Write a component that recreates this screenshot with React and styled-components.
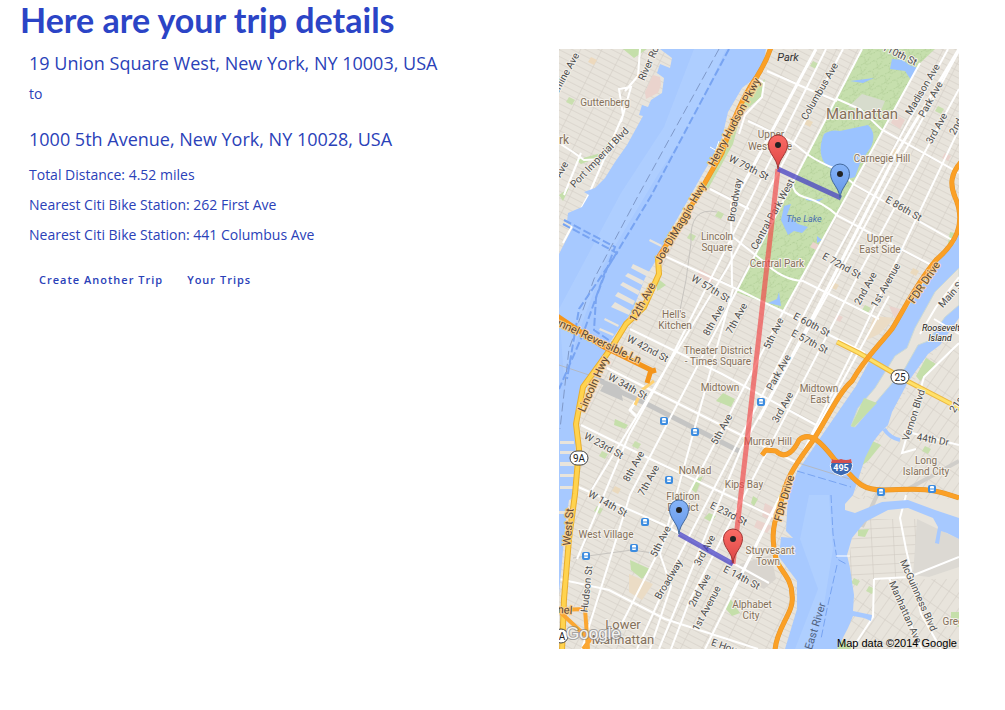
import React from "react";
import styled, { createGlobalStyle } from "styled-components";

const GlobalStyle = createGlobalStyle`
  body {
    margin: 0;
    background: #fff;
    color: #2a41b8;
    font-family: "Open Sans", "Noto Sans", sans-serif;
  }
`;

const Page = styled.div`
  padding: 0 46px 60px 20px;
`;

const Title = styled.h1`
  margin: 0;
  padding-bottom: 9px;
  font-family: Lato, "Open Sans", sans-serif;
  font-size: 34px;
  font-weight: 700;
  line-height: 40px;
  color: #2b44c6;
`;

const Content = styled.main`
  display: flex;
  align-items: flex-start;
  justify-content: space-between;
  gap: 40px;
`;

const Details = styled.section`
  padding-left: 9px;
  min-width: 0;
`;

const Address = styled.h2`
  margin: 0;
  padding-bottom: ${({ $gap }) => $gap || "6px"};
  font-size: 18px;
  font-weight: 400;
  line-height: 28px;
`;

const Line = styled.p`
  margin: 0;
  padding-bottom: ${({ $gap }) => $gap || "10px"};
  font-size: 14px;
  line-height: 20px;
`;

const Actions = styled.div`
  display: flex;
  gap: 4px;
  padding-top: 10px;
`;

const Action = styled.button`
  border: 0;
  padding: 5px 10px;
  background: transparent;
  color: #2a41b8;
  font-family: "Open Sans", "Noto Sans", sans-serif;
  font-size: 11px;
  font-weight: 600;
  letter-spacing: 1px;
  line-height: 20px;
  cursor: pointer;
`;

const MapFrame = styled.figure`
  flex: 0 0 400px;
  margin: 0;
`;

const MapDrawing = styled.svg`
  display: block;
  width: 100%;
  height: auto;
  font-family: Roboto, sans-serif;
`;

const MapText = styled.text`
  font-size: ${({ $size }) => $size}px;
  font-style: ${({ $italic }) => ($italic ? "italic" : "normal")};
  fill: ${({ $fill }) => $fill};
  text-anchor: middle;
  paint-order: stroke;
  stroke: ${({ $halo }) => $halo};
  stroke-width: 2px;
  stroke-linejoin: round;
`;

const PLACE = "#84705a";
const STREET = "#4d4d4d";
const ROUTE = "#5a4534";
const ISLAND = "#222222";

const halos = {
  [PLACE]: "#f4f1eb",
  [STREET]: "#f4f1eb",
  [ISLAND]: "#f4f1eb",
  [ROUTE]: "#fbd08c",
};

const labels = [
  ["Guttenberg", 46, 53, 0, PLACE],
  ["rk", 5, 91, 0, PLACE, 12],
  ["Park", 229, 8, 0, "#333", 11, true],
  ["Manhattan", 303, 66, 0, PLACE, 15],
  ["Upper", 212, 85, 0, PLACE],
  ["West Side", 211, 97, 0, PLACE],
  ["Carnegie Hill", 323, 109, 0, PLACE],
  ["The Lake", 245, 169, 0, "#4b6fae", 9, true],
  ["Lincoln", 158, 187, 0, PLACE],
  ["Square", 158, 198, 0, PLACE],
  ["Central Park", 218, 214, 0, PLACE],
  ["Upper", 321, 189, 0, PLACE],
  ["East Side", 321, 200, 0, PLACE],
  ["Hell's", 115, 265, 0, PLACE],
  ["Kitchen", 116, 276, 0, PLACE],
  ["Theater District", 159, 301, 0, PLACE],
  ["- Times Square", 159, 312, 0, PLACE],
  ["Midtown", 161, 338, 0, PLACE],
  ["Midtown", 260, 339, 0, PLACE],
  ["East", 261, 350, 0, PLACE],
  ["Murray Hill", 209, 392, 0, PLACE],
  ["NoMad", 136, 421, 0, PLACE],
  ["Kips Bay", 185, 435, 0, PLACE],
  ["Flatiron", 124, 447, 0, PLACE],
  ["District", 124, 458, 0, PLACE],
  ["West Village", 47, 485, 0, PLACE],
  ["Stuyvesant", 211, 501, 0, PLACE],
  ["Town", 209, 512, 0, PLACE],
  ["Alphabet", 193, 555, 0, PLACE],
  ["City", 192, 566, 0, PLACE],
  ["Lower", 64, 576, 0, PLACE, 13],
  ["Manhattan", 64, 591, 0, PLACE, 13],
  ["Long", 367, 411, 0, PLACE],
  ["Island City", 367, 422, 0, PLACE],
  ["Greenpoint", 408, 572, 0, PLACE],
  ["Roosevelt", 382, 278, 0, ISLAND, 9, true],
  ["Island", 381, 288, 0, ISLAND, 9, true],
  ["Bergenline Ave", 1, 33, -61, STREET],
  ["River Rd", 89, 14, -66, STREET],
  ["Port Imperial Blvd", 40, 108, -46, STREET],
  ["Ave", 2, 120, -60, STREET],
  ["Columbus Ave", 260, 42, -60, STREET],
  ["110th St", 341, 5, 26, STREET],
  ["Madison Ave", 363, 40, -59, STREET],
  ["Park Ave", 371, 50, -61, STREET],
  ["3rd Ave", 377, 79, -61, STREET],
  ["2nd Ave", 401, 69, -61, STREET],
  ["W 79th St", 190, 118, 27, STREET],
  ["Broadway", 175, 151, -80, STREET],
  ["Central Park West", 213, 165, -61, STREET],
  ["E 86th St", 345, 159, 30, STREET],
  ["W 57th St", 152, 239, 31, STREET],
  ["8th Ave", 154, 271, -61, STREET],
  ["7th Ave", 177, 269, -61, STREET],
  ["5th Ave", 214, 284, -64, STREET],
  ["2nd Ave", 306, 239, -61, STREET],
  ["1st Avenue", 326, 236, -60, STREET],
  ["E 72nd St", 283, 216, 29, STREET],
  ["E 60th St", 253, 275, 28, STREET],
  ["E 57th St", 251, 292, 28, STREET],
  ["Main St", 392, 244, -48, STREET],
  ["W 42nd St", 89, 299, 28, STREET],
  ["W 34th St", 69, 337, 29, STREET],
  ["Park Ave", 219, 323, -61, STREET],
  ["3rd Ave", 223, 358, -61, STREET],
  ["5th Ave", 162, 380, -61, STREET],
  ["W 23rd St", 45, 396, 29, STREET],
  ["8th Ave", 74, 417, -61, STREET],
  ["7th Ave", 89, 431, -61, STREET],
  ["Vernon Blvd", 354, 366, -72, STREET],
  ["44th Dr", 374, 390, 10, STREET],
  ["21st St", 401, 349, -56, STREET],
  ["W 14th St", 49, 454, 29, STREET],
  ["5th Ave", 101, 492, -63, STREET],
  ["E 23rd St", 170, 464, 27, STREET],
  ["3rd Ave", 145, 501, -61, STREET],
  ["Broadway", 109, 530, -59, STREET],
  ["2nd Ave", 140, 541, -62, STREET],
  ["1st Avenue", 147, 559, -62, STREET],
  ["E 14th St", 183, 528, 28, STREET],
  ["E Houston St", 180, 602, 20, STREET],
  ["Hudson St", 27, 540, -84, STREET],
  ["McGuinness Blvd", 360, 546, 66, STREET],
  ["Manhattan Ave", 347, 563, 66, STREET],
  ["East River", 256, 577, -73, "#50617e", 11],
  ["Henry Hudson Pkwy", 175, 73, -62, ROUTE],
  ["Joe DiMaggio Hwy", 121, 174, -60, ROUTE],
  ["12th Ave", 83, 253, -61, ROUTE],
  ["Tunnel Reversible Ln", 36, 290, 25, ROUTE],
  ["Lincoln Hwy", 34, 335, -66, ROUTE],
  ["West St", 9, 478, -85, ROUTE],
  ["FDR Drive", 365, 233, -56, ROUTE],
  ["FDR Drive", 225, 449, -74, ROUTE],
  ["Tunnel", -3, 560, 4, ROUTE],
];

function Label({ text, x, y, angle = 0, fill, size, italic }) {
  return (
    <MapText
      y="4"
      transform={`translate(${x} ${y}) rotate(${angle})`}
      $fill={fill}
      $size={size || (fill === ROUTE ? 11 : 10)}
      $italic={italic}
      $halo={halos[fill] || "none"}
    >
      {text}
    </MapText>
  );
}

function Pin({ x, y, top, bottom, edge }) {
  const id = `pin-${top.slice(1)}`;
  return (
    <g transform={`translate(${x} ${y})`}>
      <defs>
        <linearGradient id={id} x1="0" y1="0" x2="0" y2="1">
          <stop offset="0" stopColor={top} />
          <stop offset="1" stopColor={bottom} />
        </linearGradient>
      </defs>
      <path
        d="M0 0C-1-11-9.500-15-9.500-24.500A9.500 9.500 0 0 1 9.500-24.500C9.500-15 1-11 0 0Z"
        fill={`url(#${id})`}
        stroke={edge}
      />
      <circle cy="-24" r="3" fill="#222" />
    </g>
  );
}

const stations = [[202, 353], [105, 372], [136, 383], [110, 431], [86, 473], [75, 499], [27, 507], [322, 443], [373, 440]];
const fields = [[32, 8, "#edd9bd"], [10, 48, "#c9dfaf"], [254, 12, "#c9dfaf"], [248, 70, "#ead9bd"], [131, 184, "#c9dfaf"], [159, 162, "#c9dfaf"], [379, 57, "#c9dfaf"], [334, 99, "#ead9bd"], [386, 104, "#ead3cd"], [254, 193, "#ead3cd"], [306, 256, "#c9dfaf"], [354, 219, "#ead9bd"], [274, 233, "#ead9bd"], [366, 397, "#c9dfaf"], [310, 537, "#c9dfaf"], [295, 529, "#c9dfaf"], [38, 457, "#c9dfaf"], [56, 437, "#ead9bd"], [43, 402, "#c9dfaf"], [76, 392, "#c9dfaf"], [278, 265, "#ead3cd"]];

const bankWest = "M101 0L113 9L111 19L101 15L98 24L105 29L103 44L92 51L89 58L83 56L80 66L84 67L68 96L56 113L46 129L36 139L25 143L30 146L23 158L9 164L8 173L14 178L3 199L0 205V545L3 513L6 479L10 451L14 449L16 409L18 376L21 356L26 333L46 306L51 293L63 276L73 263L86 229L96 213L109 186L129 151L143 126L153 109L163 89L169 63L183 39L196 29L204 18L207 0Z";
const eastRiver = "M400 166L396 194L376 216L353 252L330 286L316 302L297 337L257 395L238 423L229 446L227 482L234 489L222 488L220 508L238 532L238 560L226 600H278L289 579L294 567L305 569L312 572L313 566L294 562L295 546L291 519L288 506L293 489L306 473L329 461L349 459L374 469L379 478L376 494L380 495L382 482L388 484L400 490V469L376 461L349 451L323 453L296 464L286 461L286 455L294 446L300 428L306 409L314 393L321 384L329 376L333 363L349 333L369 305L381 296L400 269Z";
const orangeRoads = "M212 -2C207 14 202 21 197 29C183 49 171 79 163 104L139 146L99 209M403 112C391 125 391 136 396 148C408 175 396 195 377 211C357 235 347 257 333 280C317 300 306 309 293 332C280 343 268 370 253 393C233 420 227 430 221 457C211 482 214 495 217 510C221 522 233 529 233 546C236 563 218 577 216 601M203 406L207 401L217 402C227 412 236 400 240 391C251 381 263 394 276 411C295 426 297 441 323 441C348 441 366 436 400 449";
const yellowRoad = "M99 209L100 225L85 258L67 275L53 298L24 338L17 375L20 400L16 445L10 490L5 550L3 602";

export default function App() {
  return (
    <Page>
      <GlobalStyle />
      <Title>Here are your trip details</Title>
      <Content>
        <Details>
          <Address $gap="7px">19 Union Square West, New York, NY 10003, USA</Address>
          <Line $gap="21px">to</Line>
          <Address $gap="12px">1000 5th Avenue, New York, NY 10028, USA</Address>
          <Line>Total Distance: 4.52 miles</Line>
          <Line>Nearest Citi Bike Station: 262 First Ave</Line>
          <Line>Nearest Citi Bike Station: 441 Columbus Ave</Line>
          <Actions>
            <Action type="button">Create Another Trip</Action>
            <Action type="button">Your Trips</Action>
          </Actions>
        </Details>
        <MapFrame>
          <MapDrawing viewBox="0 0 400 600" role="img" aria-label="Map of the trip through Manhattan">
            <defs>
              <pattern id="blocks" width="19" height="6" patternUnits="userSpaceOnUse" patternTransform="rotate(27)">
                <path d="M0 0H19M0 0V6" stroke="#cfcac2" fill="none" />
              </pattern>
              <pattern id="queens" width="9" height="20" patternUnits="userSpaceOnUse" patternTransform="rotate(35)">
                <path d="M0 0H9M0 0V20" stroke="#cfcac2" fill="none" />
              </pattern>
              <pattern id="brooklyn" width="22" height="9" patternUnits="userSpaceOnUse" patternTransform="rotate(-3)">
                <path d="M0 0H22M0 0V9" stroke="#cbc6be" fill="none" />
              </pattern>
              <pattern id="park" width="13" height="11" patternUnits="userSpaceOnUse" patternTransform="rotate(20)">
                <path d="M0 3Q4 0 6 6T13 3M3 11Q8 7 9 0" stroke="#adcb93" strokeDasharray="2 1" fill="none" />
              </pattern>
            </defs>
            <rect width="400" height="600" fill="#e8e4dc" />
            <rect width="400" height="600" fill="url(#blocks)" />
            <path d="M400 269L333 363L294 446L400 455Z" fill="#e8e4dc" />
            <path d="M400 269L333 363L294 446L400 455Z" fill="url(#queens)" />
            <path d="M270 450H400V600H270Z" fill="#e8e4dc" />
            <path d="M295 470H358V530H288Z" fill="url(#brooklyn)" />
            <path d="M292 530H400V600H270Z" fill="url(#queens)" />
            <path d="M358 470L400 490V518L370 528L354 526Z" fill="#dcd9d3" />
            <path d="M181 515L212 506L217 530L205 540L180 528Z" fill="#d9d5cf" />

            <path d="M303 0H376L359 16L225 261L177 243Z" fill="#c6dfad" />
            <path d="M303 0H376L359 16L225 261L177 243Z" fill="url(#park)" />
            <path d="M303 45L326 52L321 64L289 58Z" fill="#d7dccd" />
            <path d="M265 85Q272 80 281 82L309 76Q318 84 312 98L301 114L296 128L286 131L275 122L268 117Q257 105 265 85Z" fill="#9bc3ff" />
            <path d="M333 10L344 11L350 16L359 19L352 31L346 22L331 20ZM291 32L315 29L304 34ZM247 148L256 151L265 149L259 153L247 151ZM225 157L232 155L228 166L239 175L249 178L243 184L235 182L229 186L222 171ZM258 187L263 191L258 194ZM220 243L222 257L209 254L218 250Z" fill="#9bc3ff" />

            <path d="M64 0H88L75 9ZM59 80L45 106L22 115L17 111L42 104ZM400 185L388 200L391 183ZM164 344L176 350L172 358L157 352ZM135 431L144 427L137 444L132 440ZM71 511L91 520L83 530L72 521ZM98 229L107 236L98 242ZM206 30L202 48L182 65L174 95L149 140L143 135L163 103L172 75L186 47ZM0 146L10 139L4 152ZM10 378L17 373L17 388L6 384ZM278 587L294 600H273ZM392 563H400V578L392 575ZM299 481L310 480L306 488L299 487ZM307 389L322 396L309 412L298 420ZM166 559L171 549L181 564L173 567ZM367 309L377 315L361 332L357 327ZM56 370L69 376L66 380L55 376ZM150 464L157 467L152 473L145 469ZM194 447L199 450L195 457L192 454Z" fill="#c5dfaa" />
            <path d="M94 26L101 28L102 36L99 44L87 50L86 43ZM141 220L155 228L152 234L138 227ZM330 257L345 261L336 270ZM336 65L346 71L341 80L332 74ZM206 454L219 461L212 472L203 467ZM198 471L213 477L208 484L195 478Z" fill="#ead3cd" />
            <path d="M70 525L94 535L83 551L70 543ZM315 267L336 269L320 285L306 292Z" fill="#ebdcc5" />
            {fields.map(([x, y, color]) => (
              <path key={`${x}-${y}`} d={`M${x} ${y}l6 3l-3 5l-6 -3Z`} fill={color} />
            ))}

            <path d="M158 163Q130 157 132 194L127 231L119 271M14 509L73 501L101 505" fill="none" stroke="#c7c4bf" />
            <path d="M303 478L321 440H349L400 412" fill="none" stroke="#d0ceca" strokeWidth="4" />
            <path d="M40 331L66 345L86 354L180 402" fill="none" stroke="#c5c5c4" strokeWidth="5" />
            <path d="M47 332L61 337L64 352L41 342Z" fill="#c5c5c4" />

            <g fill="none" stroke="#fff" strokeWidth="2">
              <path d="M284 0L169 218L29 447M303 0L177 243L71 446L23 600M172 155L173 237M174 240L101 505L112 537L91 600M267 0L103 327L70 386L18 510M361 14L225 261L105 492L60 580M389 0L253 250L121 505L78 600M400 2L280 225L182 400L100 600M400 40L302 221L130 553L112 600M400 80L302 286L146 600M330 247L220 449L171 547" />
              <path d="M208 22L249 40L278 52M278 50L301 60L322 80L400 124M189 72L232 92L248 105Q261 114 277 120L296 136L400 195M234 131Q232 144 245 148Q264 153 279 167L376 218M99 204L182 242L229 265L306 304M71 280L163 325L257 376M48 319L180 385L240 415M22 376L87 408L215 468M17 437L105 476L210 534M151 140L190 160M170 185L204 212Q223 231 244 232L320 270M0 530L50 541L106 570L199 600M196 29L205 34L203 48L186 66L180 85" />
              <path d="M81 0L79 27L66 42M62 73L72 38L60 40L64 66L30 145L4 194M0 94L14 103L25 111L45 110L66 80M22 104L5 146M400 294L365 328L343 404L357 400M345 382L400 396M347 446L341 469L347 500L362 565L382 600M315 530L350 528L400 508M315 530L314 568L293 600M330 529L363 600M400 232L361 273L348 299" />
            </g>
            <path d="M257 0L190 125L172 157M400 0L337 105L258 260L200 370" fill="none" stroke="#fff" strokeWidth="3" />

            <path d={bankWest} fill="#a7c9ff" />
            <path d={eastRiver} fill="#a7c9ff" />
            <path d="M135 0H167L132 75L98 127L44 217L21 280L5 330L0 260L62 144L105 78Z" fill="#b2d1ff" opacity=".65" />
            <path d="M250 446H270L274 500L265 556L247 600H236L259 540L241 490Z" fill="#b2d1ff" opacity=".7" />
            <path d="M400 219L376 243L356 279L348 299L336 307L316 339L299 359L292 377L296 378L323 346L346 319L359 296L369 292L386 268L400 256Z" fill="#e8e4dc" stroke="#cbd9d5" />
            <path d="M400 228L377 258L361 285M375 270L400 285" fill="none" stroke="#fff" strokeWidth="2" />
            <path d="M305 349L318 354L295 378L292 377Z" fill="#c5dfaa" />
            <path d="M325 380Q331 389 341 391" fill="none" stroke="#a7c9ff" strokeWidth="4" />

            <g fill="#e8e4dc">
              <path d="M91 190l12 6l-1 2l-12 -6ZM74 215l17 8l-2 5l-17 -9ZM69 224l16 8l-2 4l-17 -9ZM64 233l17 9l-2 4l-18 -10ZM59 243l17 9l-2 4l-18 -9ZM56 253l16 9l-2 4l-18 -8ZM46 269l14 7l-1 2l-14 -7ZM41 279l14 6l-1 2l-14 -6Z" />
              <path d="M1 392h14v3h-14ZM1 402h14v3h-14ZM1 413h14v4h-14ZM1 425h14v3h-14ZM1 437h13v3h-13ZM0 462h7v3h-7Z" />
            </g>
            <path d="M0 316L45 331M236 413L294 431" fill="none" stroke="#b3b9c4" />

            <g fill="none" stroke="#7f99c9" strokeDasharray="9 4">
              <path d="M160 0L79 147L35 230L10 300L1 380" />
            </g>
            <g fill="none" stroke="#78a4f2" strokeDasharray="8 3">
              <path d="M170 0L92 147L46 223L24 285L0 340M5 171L56 198L37 249L35 281L57 296M4 175L58 204L20 260L8 330" strokeWidth="2" />
              <path d="M272 446L274 485L278 510L289 516M278 516L268 560L262 590M238 422L292 438" />
            </g>
            <path d="M151 98l14 8M160 92l-4 12M277 507h14" stroke="#fff" />

            <g fill="none" strokeLinejoin="round">
              <path d={yellowRoad} stroke="#e9ae2c" strokeWidth="6" />
              <path d={yellowRoad} stroke="#ffd34f" strokeWidth="4" />
              <path d="M278 293L300 304L350 333L402 360" stroke="#edb83f" strokeWidth="5" />
              <path d="M278 293L300 304L350 333L402 360" stroke="#ffe168" strokeWidth="3" />
              <path d="M77 352L71 361L78 368" stroke="#fff" strokeWidth="3" />
              <path d="M95 332L83 341L76 356" stroke="#ffd273" strokeWidth="3" />
              <path d={orangeRoads} stroke="#e59528" strokeWidth="5" />
              <path d={orangeRoads} stroke="#fba026" strokeWidth="4" />
              <path d="M-2 267L43 297L92 321L88 334M90 323L97 321" stroke="#f4951c" strokeWidth="5" />
              <path d="M1 563L31 591L24 600M0 561L26 560L29 600" stroke="#fba733" strokeWidth="4" />
            </g>

            {labels.map(([text, x, y, angle, fill, size, italic]) => (
              <Label key={`${text}-${x}-${y}`} text={text} x={x} y={y} angle={angle} fill={fill} size={size} italic={italic} />
            ))}

            {stations.map(([x, y]) => (
              <g key={`${x}-${y}`} transform={`translate(${x} ${y})`}>
                <rect x="-4" y="-4" width="8" height="8" rx="2" fill="#3c8ce0" />
                <rect x="-2" y="-3" width="4" height="5" rx="1" fill="#fff" />
                <path d="M-2 0H2" stroke="#3c8ce0" />
              </g>
            ))}

            <g stroke="#444" fill="#fff">
              <rect x="11" y="402" width="18" height="14" rx="7" />
              <rect x="332" y="321" width="18" height="14" rx="7" />
              <circle cx="2" cy="587" r="7" />
            </g>
            <Label text="9A" x={20} y={409} fill="#222" />
            <Label text="25" x={341} y={328} fill="#222" />
            <Label text="A" x={3} y={587} fill="#222" />
            <path d="M273 411Q282 414 292 411Q298 423 282 427Q267 423 273 411Z" fill="#3b69b2" stroke="#fff" />
            <path d="M273 410Q277 412 282 410Q287 412 292 410L293 414H272Z" fill="#d35050" />
            <text x="282" y="422" textAnchor="middle" fontSize="9" fontWeight="700" fill="#fff">495</text>

            <path d="M219 120L174 515" stroke="#f04848" strokeOpacity=".68" strokeWidth="5" />
            <path d="M219 120L282 149M120 485L174 515" stroke="#4640c4" strokeOpacity=".75" strokeWidth="5" />
            <Pin x={281} y={149} top="#86b4f8" bottom="#6496e8" edge="#42689c" />
            <Pin x={219} y={120} top="#fb6c65" bottom="#dc4545" edge="#9f3634" />
            <Pin x={120} y={485} top="#86b4f8" bottom="#6496e8" edge="#42689c" />
            <Pin x={174} y={514} top="#fb6c65" bottom="#dc4545" edge="#9f3634" />

            <text x="7" y="590" fontFamily="Liberation Sans, sans-serif" fontSize="17" fill="#fff" fillOpacity=".9" stroke="#888" strokeOpacity=".7" strokeWidth="2" paintOrder="stroke">Google</text>
            <text x="398" y="598" textAnchor="end" fontFamily="Liberation Sans, sans-serif" fontSize="11" fill="#000">Map data ©2014 Google</text>
          </MapDrawing>
        </MapFrame>
      </Content>
    </Page>
  );
}
